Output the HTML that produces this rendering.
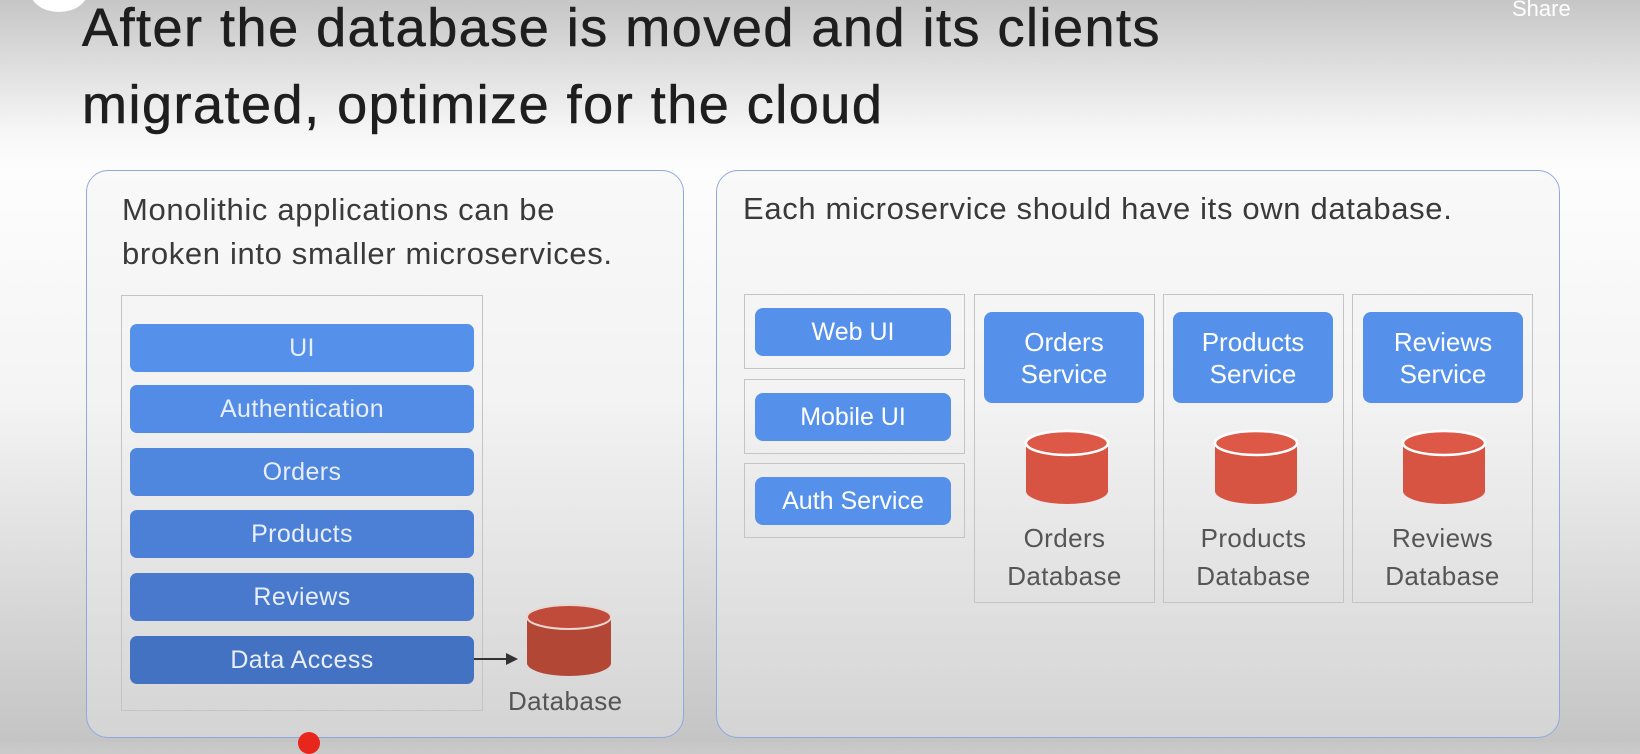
<!DOCTYPE html>
<html><head><meta charset="utf-8"><style>
*{margin:0;padding:0;box-sizing:border-box}
body{width:1640px;height:742px;overflow:hidden;position:relative;font-family:"Liberation Sans",sans-serif;
background:linear-gradient(#c6c6c6 0px,#f6f6f6 130px,#fdfdfd 170px,#f4f4f4 400px,#c4c4c4 742px)}
.a{position:absolute}
.t{left:82px;font-size:54px;color:#1e1e1e;white-space:nowrap;letter-spacing:1.5px;line-height:62px;-webkit-text-stroke:0.6px #1e1e1e}
.panel{border:1.5px solid #8fa9e0;border-radius:22px;background:rgba(240,240,240,0.35)}
.txt{font-size:31px;color:#3a3a3a;white-space:nowrap;letter-spacing:0.65px}
.bar{left:130px;width:344px;height:48px;border-radius:7px;color:#e8eefa;font-size:25px;letter-spacing:0.4px;display:flex;align-items:center;justify-content:center}
.box{border:1.5px solid #c4c4c4}
.btn{background:#5590ea;border-radius:8px;color:#fff;font-size:25px;display:flex;align-items:center;justify-content:center;text-align:center;line-height:32px}
.lbl{font-size:26px;color:#555;text-align:center;line-height:38px;letter-spacing:0.4px}
</style></head><body>
<div class="a" style="left:30px;top:-30px;width:58px;height:42px;border-radius:50%;background:#fff"></div>
<div class="a" style="left:1512px;top:-4px;font-size:22px;color:#fff">Share</div>
<div class="a t" style="top:-3px">After the database is moved and its clients</div>
<div class="a t" style="top:74px">migrated, optimize for the cloud</div>

<div class="a panel" style="left:86px;top:170px;width:598px;height:568px"></div>
<div class="a panel" style="left:716px;top:170px;width:844px;height:568px"></div>

<div class="a txt" style="left:122px;top:188px;line-height:44px">Monolithic applications can be<br>broken into smaller microservices.</div>
<div class="a box" style="left:121px;top:295px;width:362px;height:416px"></div>
<div class="a bar" style="top:324px;background:#5590ea">UI</div>
<div class="a bar" style="top:385px;background:#528ce6">Authentication</div>
<div class="a bar" style="top:448px;background:#4f86de">Orders</div>
<div class="a bar" style="top:510px;background:#4b80d6">Products</div>
<div class="a bar" style="top:573px;background:#4879cc">Reviews</div>
<div class="a bar" style="top:636px;background:#4472c2">Data Access</div>
<div class="a" style="left:474px;top:658px;width:34px;height:2px;background:#333"></div>
<div class="a" style="left:506px;top:653px;width:0;height:0;border-left:12px solid #333;border-top:6px solid transparent;border-bottom:6px solid transparent"></div>
<svg class="a" style="left:525px;top:603px" width="88" height="76"><path d="M2 14 V60 A42 13 0 0 0 86 60 V14 Z" fill="#b34736"/><ellipse cx="44" cy="14" rx="42" ry="12" fill="#c14b3a" stroke="#e8d6d0" stroke-width="2"/></svg>
<div class="a" style="left:508px;top:686px;font-size:26px;color:#555;letter-spacing:0.4px">Database</div>

<div class="a txt" style="left:743px;top:191px">Each microservice should have its own database.</div>
<div class="a box" style="left:744px;top:294px;width:221px;height:75px"></div>
<div class="a box" style="left:744px;top:379px;width:221px;height:75px"></div>
<div class="a box" style="left:744px;top:463px;width:221px;height:75px"></div>
<div class="a btn" style="left:755px;top:308px;width:196px;height:48px">Web UI</div>
<div class="a btn" style="left:755px;top:393px;width:196px;height:48px">Mobile UI</div>
<div class="a btn" style="left:755px;top:477px;width:196px;height:48px">Auth Service</div>

<div class="a box" style="left:974px;top:294px;width:181px;height:309px"></div>
<div class="a box" style="left:1163px;top:294px;width:181px;height:309px"></div>
<div class="a box" style="left:1352px;top:294px;width:181px;height:309px"></div>
<div class="a btn" style="left:984px;top:312px;width:160px;height:91px;font-size:26px">Orders<br>Service</div>
<div class="a btn" style="left:1173px;top:312px;width:160px;height:91px;font-size:26px">Products<br>Service</div>
<div class="a btn" style="left:1363px;top:312px;width:160px;height:91px;font-size:26px">Reviews<br>Service</div>
<svg class="a" style="left:1024px;top:429px" width="86" height="78"><path d="M2 14 V62 A41 13 0 0 0 84 62 V14 Z" fill="#d85442"/><ellipse cx="43" cy="14" rx="41" ry="12" fill="#dd5846" stroke="#fff" stroke-width="2.5"/></svg>
<svg class="a" style="left:1213px;top:429px" width="86" height="78"><path d="M2 14 V62 A41 13 0 0 0 84 62 V14 Z" fill="#d85442"/><ellipse cx="43" cy="14" rx="41" ry="12" fill="#dd5846" stroke="#fff" stroke-width="2.5"/></svg>
<svg class="a" style="left:1401px;top:429px" width="86" height="78"><path d="M2 14 V62 A41 13 0 0 0 84 62 V14 Z" fill="#d85442"/><ellipse cx="43" cy="14" rx="41" ry="12" fill="#dd5846" stroke="#fff" stroke-width="2.5"/></svg>
<div class="a lbl" style="left:974px;top:519px;width:181px">Orders<br>Database</div>
<div class="a lbl" style="left:1163px;top:519px;width:181px">Products<br>Database</div>
<div class="a lbl" style="left:1352px;top:519px;width:181px">Reviews<br>Database</div>

<div class="a" style="left:298px;top:732px;width:22px;height:22px;border-radius:50%;background:#e8261c"></div>
</body></html>
